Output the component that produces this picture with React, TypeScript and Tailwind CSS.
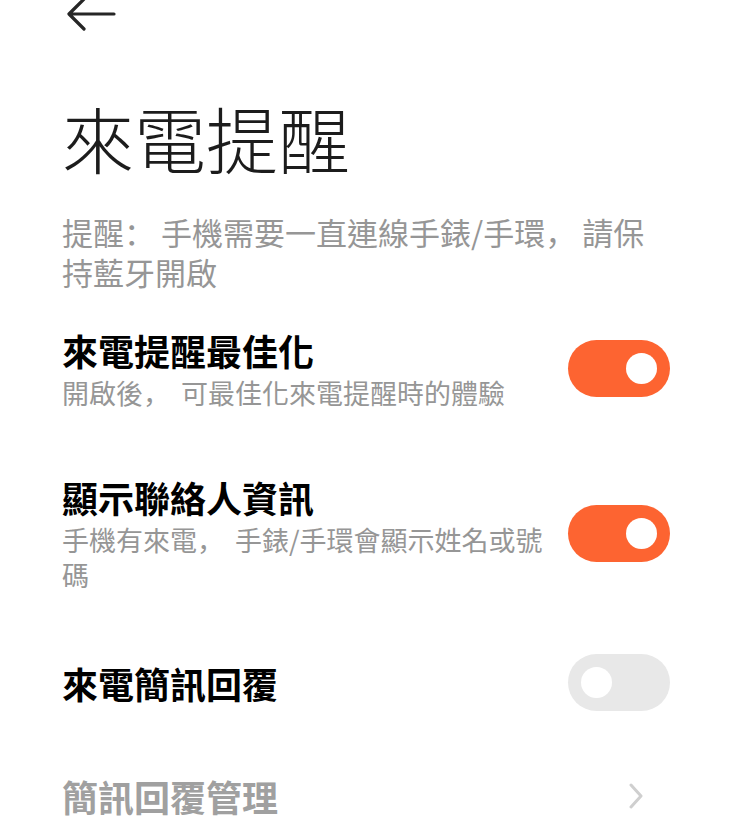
import React from "react";

function Toggle({ on }: { on: boolean }) {
  return (
    <div
      className={
        "w-[102px] h-[57px] shrink-0 rounded-full flex items-center px-[13px] " +
        (on ? "bg-[#fd6431] justify-end" : "bg-[#e8e8e8] justify-start")
      }
    >
      <div className="w-[31px] h-[31px] rounded-full bg-white" />
    </div>
  );
}

function Punct({ ch }: { ch: string }) {
  return <span className="font-['Noto_Sans_CJK_SC',sans-serif] mr-[6px]">{ch}</span>;
}

function SubPunct({ ch }: { ch: string }) {
  return <span className="font-['Noto_Sans_CJK_SC',sans-serif] mr-[11px]">{ch}</span>;
}

export default function App() {
  return (
    <div className="w-[732px] min-h-[836px] bg-white font-['Noto_Sans_CJK_TC','Noto_Sans_CJK_SC',sans-serif] overflow-hidden">
      <div className="h-[30px] flex items-center pl-[66px]">
        <svg width="50" height="34" viewBox="0 0 50 34" fill="none" className="mt-[-2px]">
          <path
            d="M48 17 H4 M18 2 L3 17 L18 32"
            stroke="#262626"
            strokeWidth="3.2"
            strokeLinecap="round"
            strokeLinejoin="round"
          />
        </svg>
      </div>

      <div className="px-[62px]">
        <h1 className="mt-[71px] text-[72px] leading-[72px] font-light text-[#1c1c1c]">
          來電提醒
        </h1>

        <p className="mt-[39px] w-[600px] text-[31px] leading-[40px] text-[#969696]">
          提醒<Punct ch="：" />手機需要一直連線手錶/手環<Punct ch="，" />請保持藍牙開啟
        </p>

        <div className="flex items-center gap-[20px] py-[32px] mt-[3px]">
          <div className="flex-1 min-w-0">
            <div className="text-[36px] leading-[46px] font-bold text-black">來電提醒最佳化</div>
            <div className="mt-[2px] text-[27px] leading-[35px] text-[#969696]">
              開啟後<SubPunct ch="，" />可最佳化來電提醒時的體驗
            </div>
          </div>
          <Toggle on={true} />
        </div>

        <div className="flex items-center gap-[20px] pt-[32px] pb-[30px]">
          <div className="flex-1 min-w-0">
            <div className="text-[36px] leading-[46px] font-bold text-black">顯示聯絡人資訊</div>
            <div className="mt-[2px] text-[27px] leading-[35px] text-[#969696]">
              手機有來電<SubPunct ch="，" />手錶/手環會顯示姓名或號碼
            </div>
          </div>
          <Toggle on={true} />
        </div>

        <div className="flex items-center gap-[20px] py-[32px]">
          <div className="flex-1 min-w-0">
            <div className="text-[36px] leading-[46px] font-bold text-black">來電簡訊回覆</div>
          </div>
          <Toggle on={false} />
        </div>

        <div className="flex items-center gap-[20px] pt-[30px] pb-[20px]">
          <div className="flex-1 min-w-0 text-[36px] leading-[46px] font-bold text-[#a0a0a0]">
            簡訊回覆管理
          </div>
          <svg width="16" height="26" viewBox="0 0 16 26" fill="none" className="mr-[26px]">
            <path
              d="M3 2 L13 13 L3 24"
              stroke="#cfcfcf"
              strokeWidth="3"
              strokeLinecap="round"
              strokeLinejoin="round"
            />
          </svg>
        </div>
      </div>
    </div>
  );
}
